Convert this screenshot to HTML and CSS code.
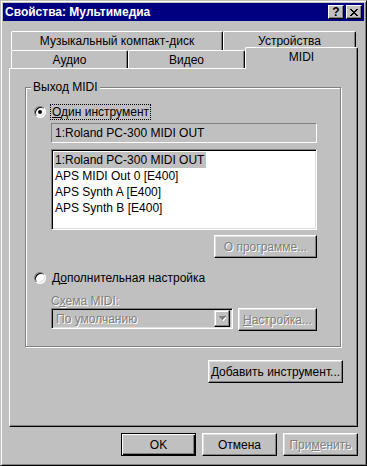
FILE: index.html
```html
<!DOCTYPE html>
<html lang="ru">

<head>
    <meta charset="UTF-8">
    <title>Свойства: Мультимедиа</title>
    <link rel="stylesheet" href="styles.css">
</head>

<body>
    <div class="window">
        <div class="titlebar">
            <span class="title">Свойства: Мультимедиа</span>
            <div class="tb-buttons">
                <span class="tb-btn">?</span>
                <span class="tb-btn">
                    <svg width="8" height="7" viewBox="0 0 8 7" shape-rendering="crispEdges">
                        <path d="M0 0h2v1h1v1h2v-1h1v-1h2v1h-1v1h-1v1h-1v1h1v1h1v1h1v1h-2v-1h-1v-1h-2v1h-1v1h-2v-1h1v-1h1v-1h1v-1h-1v-1h-1v-1h-1z" fill="#000"/>
                    </svg>
                </span>
            </div>
        </div>

        <div class="client">
            <!-- вкладки -->
            <div class="tab-row">
                <div class="tab tab-cd">Музыкальный компакт-диск</div>
                <div class="tab tab-dev">Устройства</div>
            </div>
            <div class="tab-row front">
                <div class="tab tab-audio">Аудио</div>
                <div class="tab tab-video">Видео</div>
                <div class="tab tab-midi selected">MIDI</div>
            </div>

            <div class="panel">
                <div class="group">
                    <div class="legend">Выход MIDI</div>

                    <div class="option first">
                        <span class="radio checked"></span>
                        <span class="label focus"><u>О</u>дин инструмент</span>
                    </div>

                    <div class="indent">
                        <div class="static-box">1:Roland PC-300 MIDI OUT</div>
                        <div class="listbox">
                            <div class="item"><span class="sel">1:Roland PC-300 MIDI OUT</span></div>
                            <div class="item">APS MIDI Out 0 [E400]</div>
                            <div class="item">APS Synth A [E400]</div>
                            <div class="item">APS Synth B [E400]</div>
                        </div>
                        <button class="btn about disabled">О программе...</button>
                    </div>

                    <div class="option second">
                        <span class="radio"></span>
                        <span class="label">Д<u>о</u>полнительная настройка</span>
                    </div>

                    <div class="indent">
                        <div class="field-label disabled">С<u>х</u>ема MIDI:</div>
                        <div class="combo-row">
                            <div class="combo">
                                <span class="combo-text disabled">По умолчанию</span>
                                <span class="combo-arrow">
                                    <svg width="7" height="5" viewBox="0 0 7 5" shape-rendering="crispEdges">
                                        <path d="M1 1h7v1h-1v1h-1v1h-1v1h-1v-1h-1v-1h-1v-1h-1z" fill="#fff"/>
                                        <path d="M0 0h7v1h-1v1h-1v1h-1v1h-1v-1h-1v-1h-1v-1h-1z" fill="#808080"/>
                                    </svg>
                                </span>
                            </div>
                            <button class="btn setup disabled"><u>Н</u>астройка...</button>
                        </div>
                    </div>
                </div>

                <button class="btn add"><u>Д</u>обавить инструмент...</button>
            </div>

            <div class="dialog-buttons">
                <button class="btn default">OK</button>
                <button class="btn">Отмена</button>
                <button class="btn disabled">При<u>м</u>енить</button>
            </div>
        </div>
    </div>
</body>

</html>
```

FILE: styles.css
```css
* {
    box-sizing: border-box;
}

body {
    margin: 0;
    background-color: #c0c0c0;
    font-family: "Liberation Sans", Arial, sans-serif;
    font-size: 12px;
    color: #000;
}

.window {
    width: 367px;
    height: 466px;
    padding: 2px;
    border: 1px solid;
    border-color: #c0c0c0 #000 #000 #c0c0c0;
    box-shadow: inset 1px 1px #fff, inset -1px -1px #808080;
    background-color: #c0c0c0;
    display: flex;
    flex-direction: column;
}

.titlebar {
    height: 18px;
    padding: 0 2px;
    background-color: #000080;
    color: #fff;
    display: flex;
    align-items: center;
    justify-content: space-between;
}

.title {
    font-weight: bold;
}

.tb-buttons {
    display: flex;
    gap: 2px;
}

.tb-btn {
    width: 16px;
    height: 14px;
    background-color: #c0c0c0;
    border: 1px solid;
    border-color: #fff #000 #000 #fff;
    box-shadow: inset -1px -1px #808080;
    color: #000;
    font-weight: bold;
    font-size: 12px;
    line-height: 12px;
    display: flex;
    align-items: center;
    justify-content: center;
}

.client {
    padding: 10px 6px 0 6px;
    display: flex;
    flex-direction: column;
}

/* вкладки */
.tab-row {
    display: flex;
    align-items: flex-start;
    padding-left: 2px;
}

.tab {
    height: 19px;
    border: 1px solid;
    border-bottom: none;
    border-color: #fff #000 #000 #fff;
    border-radius: 2px 2px 0 0;
    box-shadow: inset -1px 0 #808080;
    background-color: #c0c0c0;
    display: flex;
    align-items: center;
    justify-content: center;
}

.front .tab {
    height: 18px;
}

.tab-cd {
    width: 212px;
}

.tab-dev {
    width: 133px;
}

.tab-audio,
.tab-video {
    width: 117px;
}

.tab-midi {
    width: 113px;
}

.front .selected {
    height: 22px;
    margin-top: -3px;
    margin-bottom: -1px;
    padding-bottom: 3px;
    position: relative;
    z-index: 1;
}

.panel {
    height: 359px;
    padding: 18px 15px 0 15px;
    border: 1px solid;
    border-color: #fff #000 #000 #fff;
    box-shadow: inset -1px -1px #808080;
    display: flex;
    flex-direction: column;
}

/* группа */
.group {
    width: 316px;
    height: 260px;
    padding-left: 8px;
    border: 1px solid #808080;
    box-shadow: inset 1px 1px #fff, 1px 1px #fff;
    display: flex;
    flex-direction: column;
}

.legend {
    align-self: flex-start;
    margin: -8px 0 0 -3px;
    padding: 0 2px;
    line-height: 14px;
    background-color: #c0c0c0;
}

.option {
    height: 16px;
    display: flex;
    align-items: center;
}

.option.first {
    margin-top: 10px;
}

.option.second {
    margin-top: 12px;
}

.radio {
    width: 12px;
    height: 12px;
    margin-right: 4px;
    border-radius: 50%;
    border: 1px solid;
    border-color: #808080 #fff #fff #808080;
    box-shadow: inset 1px 1px #000, inset -1px -1px #dfdfdf;
    background-color: #fff;
    display: flex;
    align-items: center;
    justify-content: center;
}

.radio.checked::after {
    content: "";
    width: 4px;
    height: 4px;
    border-radius: 50%;
    background-color: #000;
}

.label {
    padding: 0 1px;
    line-height: 14px;
    border: 1px solid transparent;
}

.label.focus {
    border: 1px dotted #000;
}

.indent {
    width: 266px;
    margin-left: 17px;
    display: flex;
    flex-direction: column;
}

.static-box {
    height: 20px;
    margin-top: 3px;
    padding: 0 3px;
    line-height: 18px;
    border: 1px solid;
    border-color: #808080 #fff #fff #808080;
}

.listbox {
    height: 81px;
    margin-top: 6px;
    padding: 2px 1px;
    border: 1px solid;
    border-color: #808080 #fff #fff #808080;
    box-shadow: inset 1px 1px #000, inset -1px -1px #dfdfdf;
    background-color: #fff;
}

.item {
    height: 16px;
    line-height: 16px;
    padding-left: 2px;
}

.item .sel {
    display: inline-block;
    margin-left: -1px;
    padding: 0 2px 0 1px;
    background-color: #c0c0c0;
}

.btn {
    height: 23px;
    padding: 0;
    border: 1px solid;
    border-color: #fff #000 #000 #fff;
    box-shadow: inset -1px -1px #808080, inset 1px 1px #dfdfdf;
    background-color: #c0c0c0;
    font: inherit;
    color: #000;
    display: flex;
    align-items: center;
    justify-content: center;
}

.disabled {
    color: #808080;
    text-shadow: 1px 1px 0 #fff;
}

.about {
    width: 103px;
    margin-top: 5px;
    align-self: flex-end;
}

.field-label {
    margin-top: 8px;
    line-height: 14px;
}

.combo-row {
    display: flex;
    align-items: flex-start;
    gap: 5px;
}

.combo {
    width: 182px;
    height: 21px;
    padding: 2px 2px 2px 4px;
    border: 1px solid;
    border-color: #808080 #fff #fff #808080;
    box-shadow: inset 1px 1px #000, inset -1px -1px #dfdfdf;
    display: flex;
    align-items: center;
    justify-content: space-between;
}

.combo-arrow {
    width: 16px;
    height: 17px;
    border: 1px solid;
    border-color: #dfdfdf #000 #000 #dfdfdf;
    box-shadow: inset -1px -1px #808080, inset 1px 1px #fff;
    display: flex;
    align-items: center;
    justify-content: center;
}

.setup {
    width: 79px;
}

.add {
    width: 135px;
    margin-top: 13px;
    margin-right: -1px;
    align-self: flex-end;
}

.dialog-buttons {
    margin-top: 6px;
    display: flex;
    justify-content: flex-end;
    gap: 6px;
}

.dialog-buttons .btn {
    width: 75px;
}

.btn.default {
    border-color: #000;
    box-shadow: inset 1px 1px #fff, inset -1px -1px #000, inset -2px -2px #808080;
}
```
